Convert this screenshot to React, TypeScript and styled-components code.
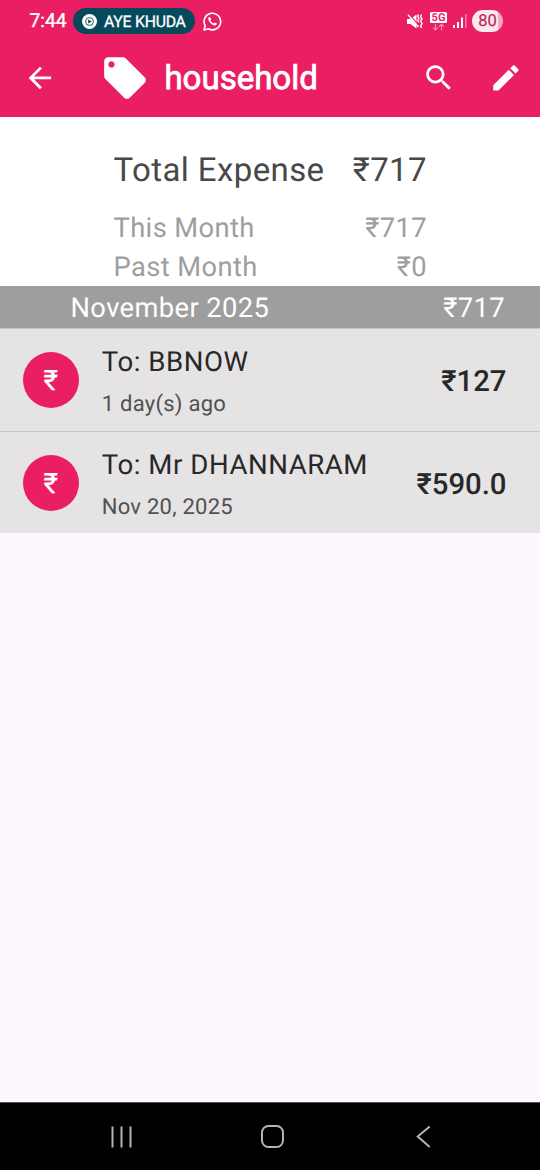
import React from 'react';
import styled, { createGlobalStyle } from 'styled-components';

const PINK = '#e91e63';

const GlobalStyle = createGlobalStyle`
  * { box-sizing: border-box; }
  html, body { margin: 0; padding: 0; }
  body {
    font-family: Roboto, "Noto Sans", sans-serif;
    text-rendering: geometricPrecision;
  }
  svg { display: block; flex: none; }
`;

const Screen = styled.div`
  width: 540px;
  height: 1170px;
  display: flex;
  flex-direction: column;
  background: #fef7ff;
  overflow: hidden;
`;

const Header = styled.header`
  height: 117px;
  flex: none;
  background: ${PINK};
  color: #fff;
`;

const StatusBar = styled.div`
  height: 42px;
  padding: 0 37px 0 29.5px;
  display: flex;
  align-items: center;
`;

const Clock = styled.span`
  width: 43.5px;
  font-size: 19.3px;
  line-height: 42px;
  font-weight: 400;
  -webkit-text-stroke: 0.4px currentColor;
`;

const MediaChip = styled.div`
  width: 122px;
  height: 26px;
  padding-left: 9px;
  margin-right: 8px;
  border-radius: 13px;
  background: #05495a;
  display: flex;
  align-items: center;
  gap: 7px;
  font-size: 15.8px;
  font-weight: 400;
  -webkit-text-stroke: 0.3px currentColor;
  letter-spacing: -0.25px;
  white-space: nowrap;
`;

const StatusIcons = styled.div`
  margin-left: auto;
  display: flex;
  align-items: center;
`;

const NetworkBadge = styled.div`
  width: 17px;
  margin: 0 6px 0 7px;
  display: flex;
  flex-direction: column;
  align-items: center;
`;

const NetworkLabel = styled.span`
  width: 17px;
  height: 11px;
  border-radius: 1.5px;
  background: #fff;
  color: ${PINK};
  font-size: 11px;
  line-height: 11.5px;
  font-weight: 700;
  text-align: center;
`;

const Battery = styled.span`
  width: 31px;
  height: 22px;
  margin-left: 5px;
  border-radius: 11px;
  background: linear-gradient(90deg, #fde9f0 0 26px, #f5a5c1 26px);
  color: #c0265c;
  font-size: 16.5px;
  line-height: 23px;
  font-weight: 400;
  -webkit-text-stroke: 0.2px currentColor;
  text-align: center;
`;

const Toolbar = styled.div`
  height: 72px;
  padding: 0 17px 0 23px;
  display: flex;
  align-items: center;
`;

const TagSlot = styled.div`
  margin: 0 14px 0 43.7px;
`;

const Title = styled.h1`
  margin: 0;
  padding-top: 1.5px;
  flex: 1;
  font-size: 33px;
  line-height: 40px;
  font-weight: 400;
  -webkit-text-stroke: 0.8px currentColor;
`;

const ActionGroup = styled.div`
  display: flex;
  gap: 34px;
`;

const Summary = styled.section`
  height: 169px;
  flex: none;
  padding: 32px 113px 0 113.5px;
  background: #fff;
`;

const SummaryLine = styled.div<{ $total?: boolean }>`
  display: flex;
  justify-content: space-between;
  font-size: ${p => (p.$total ? '33px' : '27.3px')};
  line-height: ${p => (p.$total ? '44px' : '39px')};
  height: ${p => (p.$total ? '60px' : '39px')};
  color: ${p => (p.$total ? '#484848' : '#9e9e9e')};
  letter-spacing: 0.4px;
  white-space: nowrap;
`;

const MonthBar = styled.div`
  height: 42px;
  flex: none;
  padding: 1px 35px 0 70.5px;
  display: flex;
  justify-content: space-between;
  background: #9e9e9e;
  color: #fff;
  font-size: 27.3px;
  line-height: 42px;
  letter-spacing: 0.4px;
`;

const ExpenseRow = styled.div`
  height: 103px;
  flex: none;
  padding: 0 33.5px 0 22.5px;
  display: flex;
  align-items: center;
  background: #e5e3e4;
  border-top: 1.4px solid #c8c5d2;
  &:last-child {
    height: 102px;
    padding-top: 1px;
  }
`;

const List = styled.section`
  flex: none;
`;

const Avatar = styled.div`
  width: 56.25px;
  height: 56.25px;
  border-radius: 50%;
  background: ${PINK};
  color: #fff;
  font-size: 28px;
  line-height: 58px;
  font-weight: 400;
  -webkit-text-stroke: 0.25px currentColor;
  text-align: center;
`;

const Details = styled.div`
  flex: 1;
  margin-left: 23px;
  height: 93px;
`;

const Payee = styled.div`
  font-size: 27.6px;
  line-height: 56px;
  color: #282828;
  letter-spacing: 0.55px;
  white-space: nowrap;
`;

const When = styled.div`
  font-size: 22px;
  line-height: 30px;
  color: #515151;
  letter-spacing: 0.25px;
`;

const Amount = styled.div`
  padding-top: 4px;
  font-size: 29.3px;
  line-height: 36px;
  font-weight: 500;
  color: #282828;
`;

const NavBar = styled.nav`
  height: 68px;
  flex: none;
  margin-top: auto;
  padding: 0 108px 0 111px;
  border-top: 1px solid #55525a;
  background: #000;
  display: flex;
  align-items: center;
  gap: 128.5px;
`;

const Glyph = ({ d, size = 33.75 }: { d: string; size?: number }) => (
  <svg width={size} height={size} viewBox="0 0 24 24" fill="currentColor"><path d={d} /></svg>
);

const MusicIcon = () => (
  <svg width="15" height="15" viewBox="0 0 15 15" fill="none">
    <circle cx="7.5" cy="7.5" r="7.5" fill="#fff" />
    <circle cx="7.5" cy="7.5" r="3.9" stroke="#05495a" strokeWidth="0.9" />
    <path d="M6.2 5.4 9.8 7.5 6.2 9.6z" fill="#05495a" />
  </svg>
);

const ChatIcon = () => (
  <svg width="19" height="19" viewBox="0 0 19 19" fill="none">
    <path d="M1 18 2.2 13.7A8.3 8.3 0 1 1 5.4 16.8Z" stroke="#fff" strokeWidth="1.6" strokeLinejoin="round" />
    <path d="M6.8 5.1C6.3 5 5.1 5.9 5.3 7.2 5.7 10 8.9 13.1 11.8 13.4 13 13.4 14 12.4 13.9 11.5L11.8 10.4 10.8 11.5C9.3 10.9 8.2 9.8 7.5 8.4L8.2 7.4Z" fill="#fff" />
  </svg>
);

const MuteVibrateIcon = () => (
  <svg width="16" height="17" viewBox="0 0 16 17" fill="none">
    <path d="M0 6H3.5L9.5 1.5V15.5L3.5 11H0Z" fill="#fff" />
    <path d="M1.6 0.6 12.4 13.2" stroke={PINK} strokeWidth="1.3" />
    <path d="M1 1.7 11.5 14" stroke="#fff" strokeWidth="1.4" />
    <path d="M11.5 1.5 10.8 3.5 12 5.5 10.8 7.5 12 9.5M14.6 1.5 13.6 3.5 15 5.8 13.6 8.1 15 10.5 13.6 12.8 14.6 15" stroke="#fff" strokeWidth="1.4" />
  </svg>
);

const DataArrows = () => (
  <svg width="13" height="8" viewBox="0 0 13 8" fill="none" stroke="#f591b3" strokeWidth="1.1">
    <path d="M3.5 1V7M1 4.6 3.5 7 6 4.6M9.5 7.5V1.3M7 3.7 9.5 1.3 12 3.7" />
  </svg>
);

const SignalIcon = () => (
  <svg width="14" height="16" viewBox="0 0 14 16" fill="#fff">
    <rect x="0" y="12" width="2" height="3" />
    <rect x="4" y="9" width="2" height="6" />
    <rect x="8" y="4.5" width="2" height="10.5" />
    <rect x="12" y="1" width="1.6" height="14" opacity="0.4" />
  </svg>
);

const expenses = [
  { payee: 'To: BBNOW', when: '1 day(s) ago', amount: '₹127' },
  { payee: 'To: Mr DHANNARAM', when: 'Nov 20, 2025', amount: '₹590.0' },
];

export default function App() {
  return (
    <>
      <GlobalStyle />
      <Screen>
        <Header>
          <StatusBar>
            <Clock>7:44</Clock>
            <MediaChip><MusicIcon />AYE KHUDA</MediaChip>
            <ChatIcon />
            <StatusIcons>
              <MuteVibrateIcon />
              <NetworkBadge>
                <NetworkLabel>5G</NetworkLabel>
                <DataArrows />
              </NetworkBadge>
              <SignalIcon />
              <Battery>80</Battery>
            </StatusIcons>
          </StatusBar>
          <Toolbar>
            <Glyph d="M20 11H7.83l5.59-5.59L12 4l-8 8 8 8 1.41-1.41L7.83 13H20v-2z" />
            <TagSlot>
              <Glyph size={50} d="M21.41 11.58l-9-9C12.05 2.22 11.55 2 11 2H4c-1.1 0-2 .9-2 2v7c0 .55.22 1.05.59 1.42l9 9c.36.36.86.58 1.41.58.55 0 1.05-.22 1.41-.59l7-7c.37-.36.59-.86.59-1.41 0-.55-.23-1.06-.59-1.42zM5.5 7C4.67 7 4 6.33 4 5.5S4.67 4 5.5 4 7 4.67 7 5.5 6.33 7 5.5 7z" />
            </TagSlot>
            <Title>household</Title>
            <ActionGroup>
              <Glyph d="M15.5 14h-.79l-.28-.27C15.41 12.59 16 11.11 16 9.5 16 5.91 13.09 3 9.5 3S3 5.91 3 9.5 5.91 16 9.5 16c1.61 0 3.09-.59 4.23-1.57l.27.28v.79l5 4.99L20.49 19l-4.99-5zm-6 0C7.01 14 5 11.99 5 9.5S7.01 5 9.5 5 14 7.01 14 9.5 11.99 14 9.5 14z" />
              <Glyph d="M3 17.25V21h3.75L17.81 9.94l-3.75-3.75L3 17.25zM20.71 7.04c.39-.39.39-1.02 0-1.41l-2.34-2.34c-.39-.39-1.02-.39-1.41 0l-1.83 1.83 3.75 3.75 1.83-1.83z" />
            </ActionGroup>
          </Toolbar>
        </Header>
        <Summary>
          <SummaryLine $total><span>Total Expense</span><span>₹717</span></SummaryLine>
          <SummaryLine><span>This Month</span><span>₹717</span></SummaryLine>
          <SummaryLine><span>Past Month</span><span>₹0</span></SummaryLine>
        </Summary>
        <MonthBar><span>November 2025</span><span>₹717</span></MonthBar>
        <List>
          {expenses.map(e => (
            <ExpenseRow key={e.payee}>
              <Avatar>₹</Avatar>
              <Details>
                <Payee>{e.payee}</Payee>
                <When>{e.when}</When>
              </Details>
              <Amount>{e.amount}</Amount>
            </ExpenseRow>
          ))}
        </List>
        <NavBar>
          <svg width="21" height="22" viewBox="0 0 21 22" stroke="#b4b4b4" strokeWidth="2">
            <path d="M1.5 0.5V21.5M10.5 0.5V21.5M19.5 0.5V21.5" />
          </svg>
          <svg width="24" height="24" viewBox="0.5 0.5 24 24" fill="none" stroke="#b4b4b4" strokeWidth="2">
            <rect x="1.5" y="1.5" width="21" height="21" rx="6.5" />
          </svg>
          <svg width="18" height="24" viewBox="-2.7 0.5 18 24" fill="none" stroke="#b4b4b4" strokeWidth="2">
            <path d="M14 2 2 12 14 22.5" />
          </svg>
        </NavBar>
      </Screen>
    </>
  );
}
